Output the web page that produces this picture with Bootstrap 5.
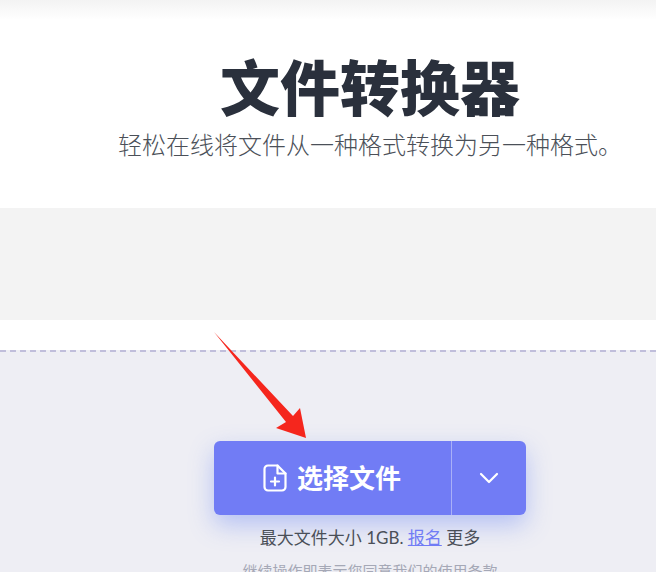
<!DOCTYPE html>
<html lang="zh">
<head>
<meta charset="utf-8">
<title>文件转换器</title>
<link href="https://cdn.jsdelivr.net/npm/bootstrap@5.3.0/dist/css/bootstrap.min.css" rel="stylesheet">
<style>
html,body{height:572px;overflow:hidden;}
body{font-family:"Lato","Noto Sans CJK SC",sans-serif;background:#fff;color:#2a303c;}
.hero-top{height:208px;padding-left:84px;padding-top:52px;background:linear-gradient(#f3f3f3,#fff 20px);}
.hero-title{font-size:60px;line-height:72px;font-weight:900;color:#2a303c;margin:0;}
.hero-sub{font-size:24px;line-height:36px;font-weight:300;color:#4b5058;margin:3px 0 0;white-space:nowrap;}
.ad-band{height:112px;background:#f3f3f3;}
.gap-white{height:30px;background:#fff;}
.drop-zone{height:222px;background:#eeeef4;border-top:2px dashed #c0bedb;padding-left:84px;padding-top:89px;position:relative;}
.arrow-over{position:absolute;left:214px;top:-20px;width:94px;height:106px;}
.pick-group{width:312px;height:74px;border-radius:6px;background:#717cf5;box-shadow:0 10px 24px rgba(113,140,245,.45);color:#fff;}
.pick-main{width:237px;font-size:26px;font-weight:700;gap:10px;padding-right:1px;}
.pick-more{width:75px;border-left:1px solid #a9b0f8;}
.limit-line{font-size:17px;line-height:24px;margin-top:11px;color:#4a4f58;}
.limit-line a{color:#717cf5;}
.terms-line{font-size:15px;line-height:22px;margin-top:10px;color:#a5a8b6;white-space:nowrap;}
</style>
</head>
<body>
<header class="hero-top text-center">
  <h1 class="hero-title">文件转换器</h1>
  <p class="hero-sub">轻松在线将文件从一种格式转换为另一种格式。</p>
</header>
<div class="ad-band"></div>
<div class="gap-white"></div>
<section class="drop-zone">
  <svg class="arrow-over" viewBox="0 0 94 106"><path d="M0 0 L79 84 L86 76 L92 106 L62 96 L72 90 Z" fill="#f5261d"/></svg>
  <div class="d-flex flex-column align-items-center">
    <div class="pick-group d-flex">
      <div class="pick-main d-flex align-items-center justify-content-center">
        <svg width="24" height="28" viewBox="0 0 24 28" fill="none" stroke="#fff" stroke-width="2.2" stroke-linecap="round" stroke-linejoin="round"><path d="M14.5 1.5H5a3.5 3.5 0 0 0-3.500 3.500v18A3.500 3.500 0 0 0 5 26.500h14a3.500 3.500 0 0 0 3.500-3.500V9.500Z"/><path d="M14.500 1.500V9.500h8"/><path d="M12 13.500v8M8 17.500h8"/></svg>
        <span>选择文件</span>
      </div>
      <div class="pick-more d-flex align-items-center justify-content-center">
        <svg width="20" height="12" viewBox="0 0 20 12" fill="none" stroke="#fff" stroke-width="2.2" stroke-linecap="round" stroke-linejoin="round"><path d="M2 2l8 8 8-8"/></svg>
      </div>
    </div>
    <div class="limit-line">最大文件大小 1GB. <a href="#">报名</a> 更多</div>
    <div class="terms-line">继续操作即表示您同意我们的使用条款</div>
  </div>
</section>
<script src="https://cdn.jsdelivr.net/npm/bootstrap@5.3.0/dist/js/bootstrap.bundle.min.js"></script>
</body>
</html>
